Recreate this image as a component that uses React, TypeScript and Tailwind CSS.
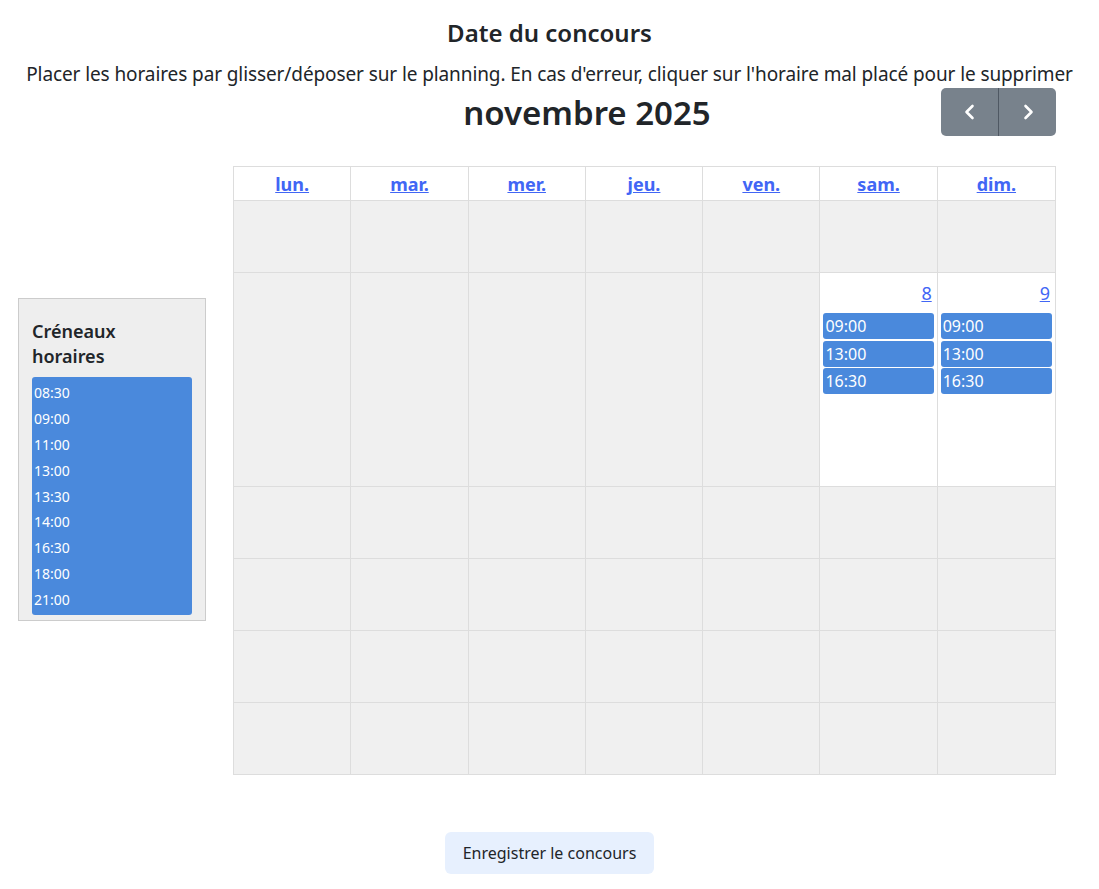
import React from 'react';

const days = ['lun.', 'mar.', 'mer.', 'jeu.', 'ven.', 'sam.', 'dim.'];
const slots = ['08:30', '09:00', '11:00', '13:00', '13:30', '14:00', '16:30', '18:00', '21:00'];
const placed: Record<number, string[]> = {
  5: ['09:00', '13:00', '16:30'],
  6: ['09:00', '13:00', '16:30'],
};

// weeks of the grid; only the 2nd one has active days (8 and 9)
const weeks = [0, 1, 2, 3, 4, 5];

const ChevronLeft = () => (
  <svg width="20" height="20" viewBox="0 0 20 20" fill="none" stroke="white" strokeWidth="2.6" strokeLinecap="round" strokeLinejoin="round">
    <path d="M12.5 4 L6.5 10 L12.5 16" />
  </svg>
);

const ChevronRight = () => (
  <svg width="20" height="20" viewBox="0 0 20 20" fill="none" stroke="white" strokeWidth="2.6" strokeLinecap="round" strokeLinejoin="round">
    <path d="M7.5 4 L13.5 10 L7.5 16" />
  </svg>
);

export default function App() {
  return (
    <div className="w-full min-h-[889px] bg-white text-[#212529] font-['Noto_Sans','Open_Sans',sans-serif]">
      {/* Headings */}
      <h2 className="pt-[17px] text-center text-[24px] leading-[32px] font-semibold">Date du concours</h2>
      <p className="mt-[12px] text-center text-[19px] leading-[26px] tracking-[-0.1px]">
        Placer les horaires par glisser/déposer sur le planning. En cas d'erreur, cliquer sur l'horaire mal placé pour le supprimer
      </p>

      <div className="flex items-start mt-[1px]">
        {/* Slots panel */}
        <div className="w-[233px] shrink-0 pl-[18px]">
          <div className="mt-[210px] w-[188px] bg-[#eeeeee] border border-[#cccccc] pt-[20px] px-[13px] pb-[5px]">
            <h3 className="text-[18px] leading-[25px] font-semibold">Créneaux<br />horaires</h3>
            <div className="mt-[8px] bg-[#4a89dc] rounded-[3px] pt-[3px] pb-[3px]">
              {slots.map(s => (
                <div key={s} className="h-[25.8px] flex items-center pl-[2px] text-[14px] text-white">{s}</div>
              ))}
            </div>
          </div>
        </div>

        {/* Calendar */}
        <div className="w-[823px]">
          <div className="flex items-center justify-between h-[48px]">
            <div />
            <h1 className="text-[33px] leading-[40px] font-semibold mt-[2px]">novembre 2025</h1>
            <div className="flex h-[48px] rounded-[5px] overflow-hidden bg-[#78828c]">
              <button className="w-[58px] flex items-center justify-center border-r border-[#4f5863]">
                <ChevronLeft />
              </button>
              <button className="w-[57px] flex items-center justify-center">
                <ChevronRight />
              </button>
            </div>
          </div>

          <div className="mt-[30px] border border-[#dddddd]">
            <div className="grid grid-cols-7 h-[33px]">
              {days.map((d, i) => (
                <div key={d} className={`flex items-center justify-center ${i < 6 ? 'border-r border-[#dddddd]' : ''}`}>
                  <a href="#" className="text-[18px] font-bold text-[#4166f5] underline leading-none">{d}</a>
                </div>
              ))}
            </div>
            {weeks.map(w => (
              <div key={w} className={`grid grid-cols-7 border-t border-[#dddddd] ${w === 1 ? 'h-[214px]' : 'h-[72px]'}`}>
                {days.map((d, i) => {
                  const active = w === 1 && placed[i];
                  return (
                    <div key={d} className={`${i < 6 ? 'border-r border-[#dddddd]' : ''} ${active ? 'bg-white' : 'bg-[#f0f0f0]'}`}>
                      {active && (
                        <div className="flex flex-col">
                          <div className="flex justify-end pr-[5px] pt-[8px] h-[40px]">
                            <a href="#" className="text-[18px] leading-[24px] text-[#4166f5] underline">{i === 5 ? '8' : '9'}</a>
                          </div>
                          <div className="flex flex-col gap-[1.5px] px-[3px]">
                            {placed[i].map(t => (
                              <div key={t} className="h-[26px] bg-[#4a89dc] rounded-[3px] text-white text-[16px] leading-[26px] px-[2px]">{t}</div>
                            ))}
                          </div>
                        </div>
                      )}
                    </div>
                  );
                })}
              </div>
            ))}
          </div>
        </div>
      </div>

      {/* Save button */}
      <div className="flex justify-center mt-[57px]">
        <button className="w-[209px] h-[42px] rounded-[6px] bg-[#e7f0fe] text-[16px] text-[#212529]">Enregistrer le concours</button>
      </div>
    </div>
  );
}
